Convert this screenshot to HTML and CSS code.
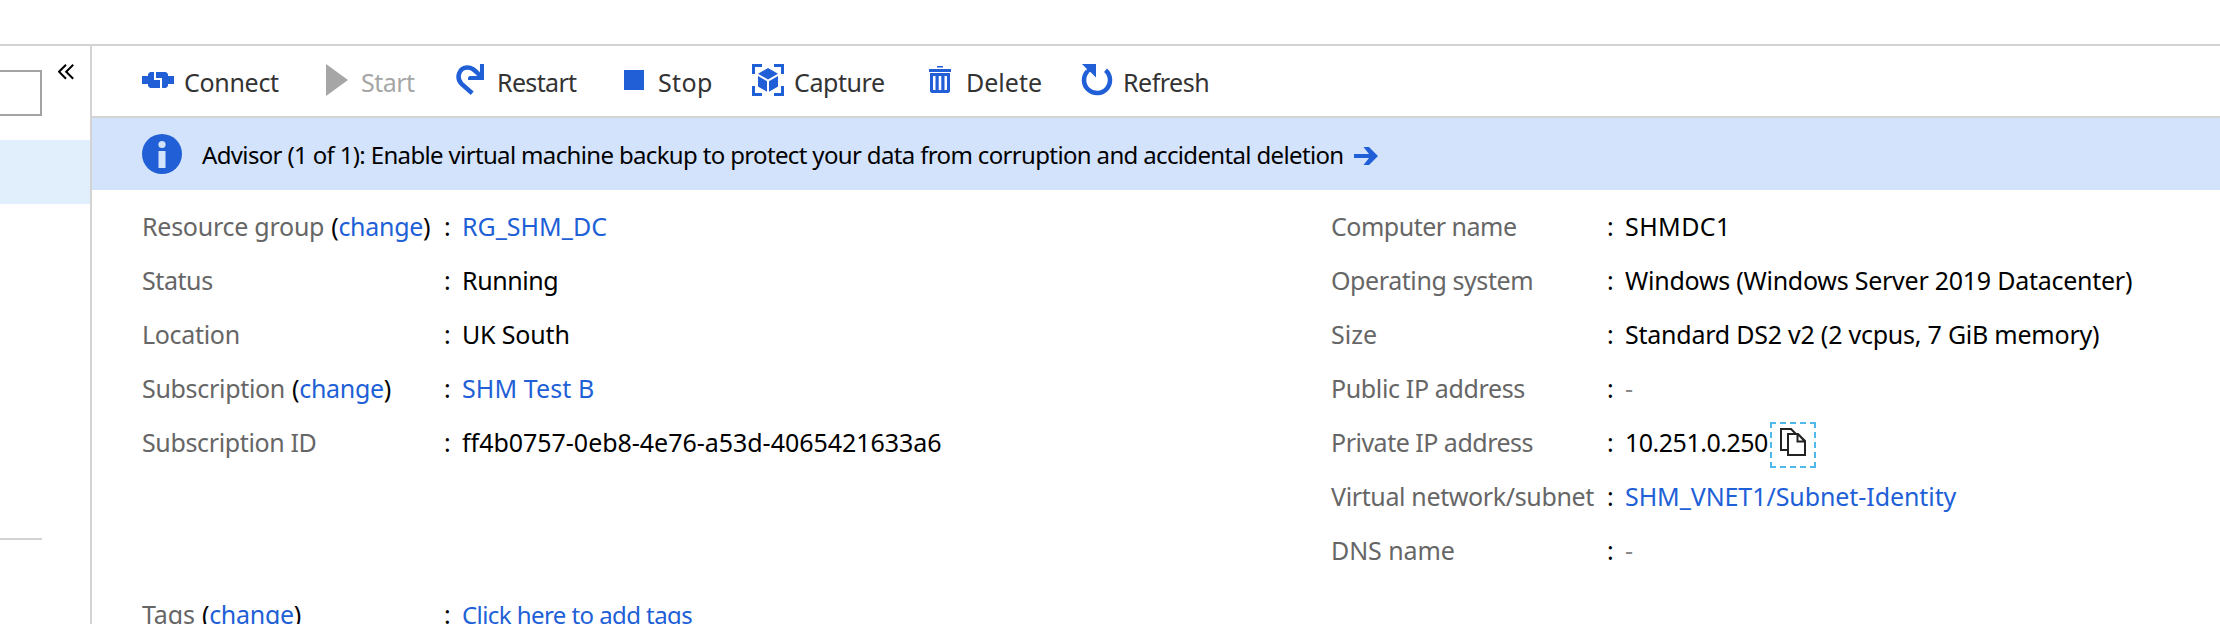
FILE: index.html
```html
<!DOCTYPE html>
<html lang="en">
<head>
<meta charset="utf-8">
<title>Virtual machine overview</title>
<link rel="stylesheet" href="styles.css">
</head>
<body>
<div class="topbar"></div>
<div class="shell">
  <aside class="sidebar">
    <div class="search-row">
      <div class="search"></div>
      <svg class="collapse" viewBox="0 0 16 16"><path d="M8 .8 1 7.700l7 7M15.200.8l-7 6.900 7 7"/></svg>
    </div>
    <div class="selected"></div>
    <div class="divider"></div>
  </aside>
  <main class="main">
    <nav class="toolbar">
      <div class="cmd"><svg class="icon" viewBox="0 0 32 32"><path d="M0 12h6V10l2-2h4v8h6v8H8l-2-2v-2H0zM14 8h10l2 2v2h6v8h-6v2l-2 2h-4V14h-6z"/></svg><span class="snug">Connect</span></div>
      <div class="cmd disabled"><svg class="icon" viewBox="0 0 32 32"><path d="M7 0v32l22-16z"/></svg><span class="tight">Start</span></div>
      <div class="cmd"><svg class="icon" viewBox="0 0 32 32"><path class="line" d="M17.200 29.200 6.300 19.600C1.200 14 3.500 3.500 12.500 3.500c4 0 6 1.500 13 8.500"/><path d="M29 0v16H13v-2.500l1.500-1.500h8L25 9V0z"/></svg><span class="tighter">Restart</span></div>
      <div class="cmd"><svg class="icon" viewBox="0 0 32 32"><path d="M8 6h20v20H8z"/></svg><span class="loose">Stop</span></div>
      <div class="cmd"><svg class="icon" viewBox="0 0 32 32"><path d="M0 0h10v3H3v7H0zM22 0h10v10h-3V3h-7zM0 22h3v7h7v3H0zM29 22h3v10H22v-3h7zM16 4l10 5.800L16 15.600 6 9.800zM6 12l9 5.200v10.500L6 22.500zM26 12l-9 5.200v10.500l9-5.200z"/></svg><span class="close">Capture</span></div>
      <div class="cmd"><svg class="icon" viewBox="0 0 32 32"><path d="M13 2h6v1.500h-6zM5 5h22v3H5zM6 9h20v18.500l-1.500 1.500h-17L6 27.500zM9 12v14h2.500V12zM14.700 12v14h2.600V12zM20.500 12v14H23V12z" fill-rule="evenodd"/></svg><span class="even">Delete</span></div>
      <div class="cmd"><svg class="icon" viewBox="0 0 32 32"><path class="line" d="M24.500 6.200A13 13 0 1 1 6.500 7.200"/><path d="M1 0h14v13.500L9.500 8 6 9l-.5-4.500z"/></svg><span class="tight">Refresh</span></div>
    </nav>
    <div class="banner">
      <svg class="info" viewBox="0 0 40 40"><circle cx="20" cy="20" r="20"/><circle class="cut" cx="20" cy="10.500" r="3.600"/><path class="cut" d="M16.500 17h7v17h-7z"/></svg>
      <span class="advisor">Advisor (1 of 1): Enable virtual machine backup to protect your data from corruption and accidental deletion</span>
      <svg class="arrow" viewBox="0 0 24 18"><path d="M0 7h15L9.500 0H15l9 9-9 9H9.500L15 11H0z"/></svg>
    </div>
    <section class="props">
      <div class="left">
        <div class="row"><div class="label"><span>Resource group</span><span class="paren">(<a>change</a>)</span></div><i>:</i><a class="even">RG_SHM_DC</a></div>
        <div class="row"><div class="label"><span class="close">Status</span></div><i>:</i><span class="close">Running</span></div>
        <div class="row"><div class="label"><span class="snug">Location</span></div><i>:</i><span class="fine">UK South</span></div>
        <div class="row"><div class="label"><span class="snug">Subscription</span><span class="paren">(<a>change</a>)</span></div><i>:</i><a class="wide">SHM Test B</a></div>
        <div class="row"><div class="label"><span class="near">Subscription ID</span></div><i>:</i><span class="guid">ff4b0757-0eb8-4e76-a53d-4065421633a6</span></div>
        <div class="row tags"><div class="label"><span class="slight">Tags</span><span class="paren">(<a>change</a>)</span></div><i>:</i><a class="hint">Click here to add tags</a></div>
      </div>
      <div class="right">
        <div class="row"><div class="label"><span class="tight">Computer name</span></div><i>:</i><span class="host">SHMDC1</span></div>
        <div class="row"><div class="label"><span class="close">Operating system</span></div><i>:</i><span>Windows (Windows Server 2019 Datacenter)</span></div>
        <div class="row"><div class="label"><span class="even">Size</span></div><i>:</i><span class="size">Standard DS2 v2 (2 vcpus, 7 GiB memory)</span></div>
        <div class="row"><div class="label"><span class="near">Public IP address</span></div><i>:</i><span class="none">-</span></div>
        <div class="row"><div class="label"><span class="tight">Private IP address</span></div><i>:</i><span class="address"><span class="tight">10.251.0.250</span><span class="copy"><svg viewBox="0 0 26 28"><path d="M8 22H1V1h10l5 5M8 6h10l7 7v14H8zM17.500 6v7.500H25M18 6l7 7.500"/></svg></span></span></div>
        <div class="row"><div class="label"><span class="near">Virtual network/subnet</span></div><i>:</i><a class="slight">SHM_VNET1/Subnet-Identity</a></div>
        <div class="row"><div class="label"><span class="slight">DNS name</span></div><i>:</i><span class="none">-</span></div>
      </div>
    </section>
  </main>
</div>
</body>
</html>
```
FILE: styles.css
```css
* { box-sizing: border-box; }
body { margin: 0; width: 2220px; height: 624px; overflow: hidden; background: #fff; color: #000; font: 25px/54px "Noto Sans", sans-serif; letter-spacing: -0.255px; }
.topbar { height: 46px; border-bottom: 2px solid #d3d3d3; }
.shell { display: flex; height: 578px; }
.sidebar { width: 92px; border-right: 2px solid #d3d3d3; }
.search-row { display: flex; align-items: flex-start; gap: 16px; padding-top: 24px; }
.search { width: 42px; height: 46px; border: 2px solid #a3a3a3; border-left: 0; }
.collapse { width: 16px; height: 16px; margin-top: -6px; fill: none; stroke: #000; stroke-width: 2; }
.selected { height: 64px; margin-top: 24px; background: #e1effc; }
.divider { width: 42px; height: 2px; margin-top: 334px; background: #d3d3d3; }
.main { flex: 1; }
.toolbar { display: grid; grid-template-columns: 177px 136px 161px 136px 172px 157px auto; height: 72px; padding: 0 50px; border-bottom: 2px solid #d3d3d3; color: #333; }
.cmd { display: flex; gap: 10px; }
.cmd span { padding-top: 9px; }
.icon { width: 32px; height: 32px; margin-top: 18px; fill: #215fd7; }
.line { fill: none; stroke: #215fd7; stroke-width: 4.5; }
.disabled { color: #a6a6a6; }
.disabled .icon { fill: #a6a6a6; }
.banner { display: flex; align-items: flex-start; height: 72px; padding: 16px 50px; background: #d4e3fc; }
.info { width: 40px; height: 40px; margin-right: 20px; fill: #215fd7; }
.info .cut { fill: #d4e3fc; }
.advisor { width: 1142px; margin-top: -6px; font-size: 24px; letter-spacing: -0.65px; white-space: nowrap; }
.arrow { width: 24px; height: 18px; margin: 13px 0 0 10px; fill: #215fd7; }
.props { display: grid; grid-template-columns: 1189px auto; padding: 9px 0 0 50px; }
.row { display: grid; height: 54px; grid-template-columns: 302px 18px auto; justify-content: start; white-space: nowrap; }
.right .row { grid-template-columns: 276px 18px auto; }
.label { display: flex; gap: 7px; color: #666; }
.paren { color: #000; letter-spacing: -0.3px; }
.row i { font-style: normal; }
.row a { color: #215fd7; }
.tags { margin-top: 118px; }
.hint { padding-top: 1px; font-size: 24px; letter-spacing: -0.57px; }
.none { color: #888; }
.address { display: flex; gap: 2px; }
.copy { display: flex; width: 46px; height: 46px; margin-top: 7px; padding: 4px 8px; border: 2px dashed #50b8ea; }
.copy svg { width: 26px; height: 28px; fill: none; stroke: #222; stroke-width: 2; }

/* Tracking */
.tighter { letter-spacing: -0.65px; }
.tight { letter-spacing: -0.5px; }
.close { letter-spacing: -0.42px; }
.near { letter-spacing: -0.365px; }
.snug { letter-spacing: -0.31px; }
.size { letter-spacing: -0.233px; }
.fine { letter-spacing: -0.17px; }
.slight { letter-spacing: -0.08px; }
.guid { letter-spacing: -0.03px; }
.even { letter-spacing: 0; }
.wide { letter-spacing: 0.09px; }
.loose { letter-spacing: 0.35px; }
.host { letter-spacing: 0.4px; }
```
